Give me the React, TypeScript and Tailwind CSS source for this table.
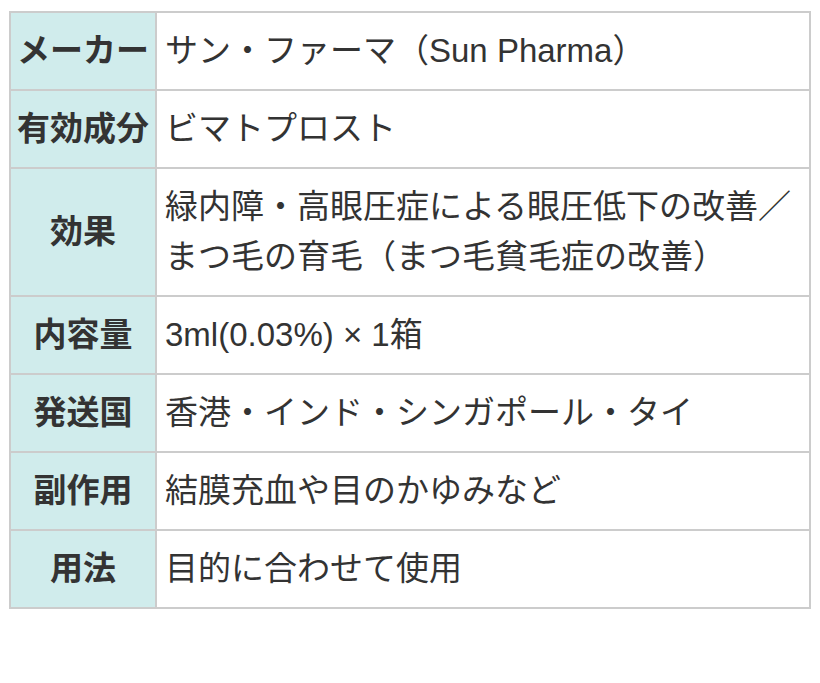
import React from 'react';

const rows: { label: string; value: React.ReactNode }[] = [
  { label: 'メーカー', value: 'サン・ファーマ（Sun Pharma）' },
  { label: '有効成分', value: 'ビマトプロスト' },
  {
    label: '効果',
    value: (
      <>
        緑内障・高眼圧症による眼圧低下の改善／
        <br />
        まつ毛の育毛（まつ毛貧毛症の改善）
      </>
    ),
  },
  { label: '内容量', value: '3ml(0.03%) × 1箱' },
  { label: '発送国', value: '香港・インド・シンガポール・タイ' },
  { label: '副作用', value: '結膜充血や目のかゆみなど' },
  { label: '用法', value: '目的に合わせて使用' },
];

export default function App() {
  return (
    <div
      className="min-h-[683px] bg-white px-[9px] pt-[11px]"
      style={{ fontFamily: '"Liberation Sans", "Noto Sans CJK JP", sans-serif' }}
    >
      <table className="w-full border-collapse border-2 border-[#cccccc] text-[33px] leading-[50px] text-[#333333]">
        <tbody>
          {rows.map((row) => (
            <tr key={row.label}>
              <th className="w-[146px] whitespace-nowrap border-2 border-[#cccccc] bg-[#d0ecec] px-[4px] py-[13px] text-center font-bold">
                {row.label}
              </th>
              <td className="border-2 border-[#cccccc] px-[8px] py-[13px] text-left font-normal">
                {row.value}
              </td>
            </tr>
          ))}
        </tbody>
      </table>
    </div>
  );
}
